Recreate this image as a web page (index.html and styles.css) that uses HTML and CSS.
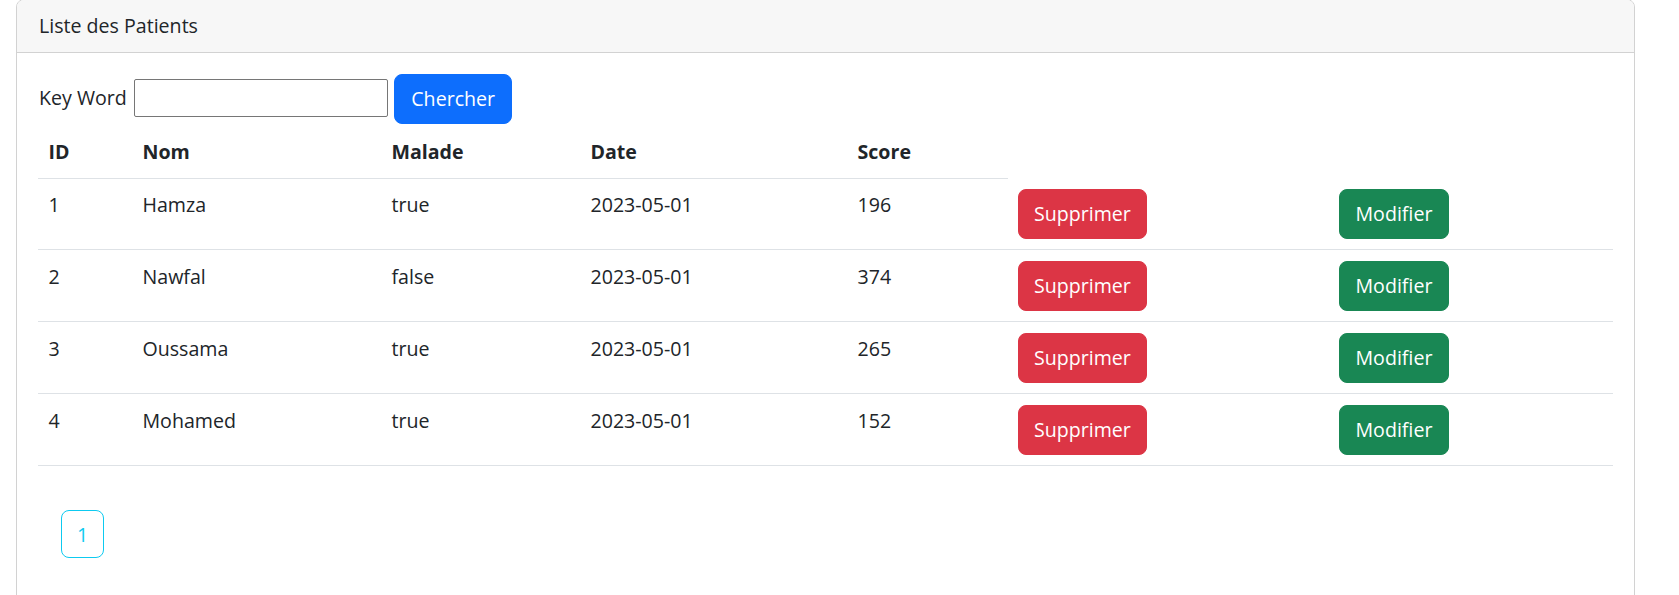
FILE: index.html
```html
<!DOCTYPE html>
<html lang="fr">
<head>
<meta charset="utf-8">
<title>Liste des Patients</title>
<link rel="stylesheet" href="styles.css">
</head>
<body>
<div class="card">
  <div class="card-header">Liste des Patients</div>
  <div class="card-body">
    <form class="search">
      <label class="search-label">Key Word</label>
      <input class="search-input" type="text">
      <button class="btn btn-primary" type="button">Chercher</button>
    </form>
    <table class="table">
      <colgroup>
        <col class="c-id"><col class="c-nom"><col class="c-malade"><col class="c-date"><col class="c-score"><col class="c-del"><col class="c-edit">
      </colgroup>
      <thead>
        <tr><th>ID</th><th>Nom</th><th>Malade</th><th>Date</th><th>Score</th></tr>
      </thead>
      <tbody>
        <tr><td>1</td><td>Hamza</td><td>true</td><td>2023-05-01</td><td>196</td><td><button class="btn btn-danger" type="button">Supprimer</button></td><td><button class="btn btn-success" type="button">Modifier</button></td></tr>
        <tr><td>2</td><td>Nawfal</td><td>false</td><td>2023-05-01</td><td>374</td><td><button class="btn btn-danger" type="button">Supprimer</button></td><td><button class="btn btn-success" type="button">Modifier</button></td></tr>
        <tr><td>3</td><td>Oussama</td><td>true</td><td>2023-05-01</td><td>265</td><td><button class="btn btn-danger" type="button">Supprimer</button></td><td><button class="btn btn-success" type="button">Modifier</button></td></tr>
        <tr><td>4</td><td>Mohamed</td><td>true</td><td>2023-05-01</td><td>152</td><td><button class="btn btn-danger" type="button">Supprimer</button></td><td><button class="btn btn-success" type="button">Modifier</button></td></tr>
      </tbody>
    </table>
    <ul class="pages">
      <li><a class="page-btn">1</a></li>
    </ul>
  </div>
</div>
</body>
</html>
```
FILE: styles.css
```css
* { box-sizing: border-box; }
html, body {
  margin: 0;
  background: #ffffff;
}
body {
  font-family: "Open Sans", "Noto Sans", sans-serif;
  font-size: 19.6px;
  line-height: 31.2px;
  color: #212529;
  overflow: hidden;
}
.card {
  margin: -1px 0 0 16px;
  width: 1619px;
  border: 1px solid #d2d2d2;
  border-radius: 8px;
  background: #fff;
}
.card-header {
  padding: 10.4px 22px;
  background: #f7f7f7;
  border-bottom: 1px solid #d2d2d2;
  border-radius: 7px 7px 0 0;
  line-height: 31.2px;
}
.card-body {
  padding: 21px;
  min-height: 600px;
}
.search {
  display: flex;
  align-items: center;
  margin: 0;
  padding-bottom: 2px;
}
.search-label {
  margin-left: 1px;
  margin-right: 7px;
  margin-bottom: 2px;
}
.search-input {
  width: 254px;
  height: 38px;
  border: 1px solid #767676;
  border-radius: 2px;
  margin: 0 6.5px 2px 0;
  padding: 1px 3px;
  font: inherit;
}
.btn {
  display: inline-flex;
  align-items: center;
  justify-content: center;
  height: 50px;
  padding: 0 15px;
  border: 1px solid transparent;
  border-radius: 8px;
  font-family: inherit;
  font-size: 19.6px;
  line-height: 31.2px;
  color: #fff;
  cursor: pointer;
}
.btn-primary { background: #0d6efd; border-color: #0d6efd; padding: 0 16px; }
.btn-danger { background: #dc3545; border-color: #dc3545; }
.btn-success { background: #198754; border-color: #198754; padding: 0 16px; }
.table {
  width: 1575px;
  table-layout: fixed;
  border-collapse: collapse;
  margin: 0;
}
.c-id { width: 94px; }
.c-nom { width: 249px; }
.c-malade { width: 199px; }
.c-date { width: 267px; }
.c-score { width: 160.5px; }
.c-del { width: 320.5px; }
.c-edit { width: 285px; }
.table th,
.table td {
  padding: 10.4px 10.5px;
  text-align: left;
  vertical-align: top;
  border-bottom: 1px solid #dee2e6;
}
.table th {
  font-weight: 700;
  padding-top: 10.4px;
  padding-bottom: 10.4px;
}
.table td {
  padding-top: 10.5px;
  padding-bottom: 10.5px;
}
.pages {
  list-style: none;
  margin: 44px 0 0 23px;
  padding: 0;
  display: flex;
}
.page-btn {
  display: flex;
  align-items: center;
  justify-content: center;
  width: 43px;
  height: 48px;
  border: 1px solid #0dcaf0;
  border-radius: 8px;
  color: #0dcaf0;
  text-decoration: none;
}
```
